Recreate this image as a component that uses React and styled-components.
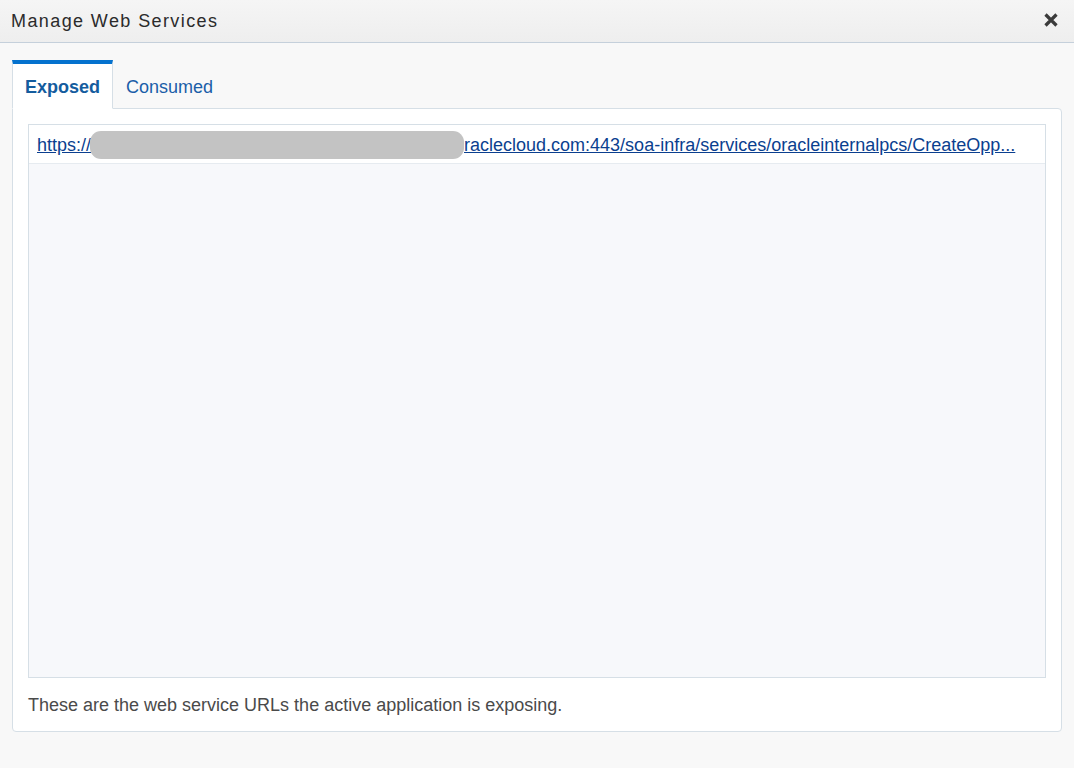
import React, { useState } from 'react'
import styled, { createGlobalStyle } from 'styled-components'

const GlobalStyle = createGlobalStyle`
  html, body {
    margin: 0;
    padding: 0;
    background: #f8f8f8;
  }
  body {
    font-family: 'Liberation Sans', Arial, sans-serif;
  }
`

const tabs = ['Exposed', 'Consumed']

const services = [
  {
    prefix: 'https://',
    rest: 'raclecloud.com:443/soa-infra/services/oracleinternalpcs/CreateOpp...',
  },
]

const App = () => {
  const [active, setActive] = useState('Exposed')
  return (
    <Dialog>
      <GlobalStyle />
      <Header>
        <Title>Manage Web Services</Title>
        <CloseButton aria-label='close'>
          <svg width='16' height='16' viewBox='0 0 16 16'>
            <path
              d='M2.5 2.5 L13.5 13.5 M13.5 2.5 L2.5 13.5'
              stroke='#3b3b3b'
              strokeWidth='3.2'
              strokeLinecap='butt'
            />
          </svg>
        </CloseButton>
      </Header>
      <Body>
        <TabBar>
          {tabs.map((tab) => (
            <Tab key={tab} $active={tab === active} onClick={() => setActive(tab)}>
              {tab}
            </Tab>
          ))}
        </TabBar>
        <Panel>
          <List>
            {services.map((s, i) => (
              <Row key={i}>
                <UrlLink href='#'>
                  {s.prefix}
                  <Redacted />
                  {s.rest}
                </UrlLink>
              </Row>
            ))}
          </List>
          <Note>These are the web service URLs the active application is exposing.</Note>
        </Panel>
      </Body>
    </Dialog>
  )
}

const Dialog = styled.div`
  width: 1074px;
  height: 768px;
  display: flex;
  flex-direction: column;
  background: #f8f8f8;
`

const Header = styled.div`
  height: 42px;
  flex-shrink: 0;
  display: flex;
  align-items: center;
  justify-content: space-between;
  padding: 0 14px 0 11px;
  background: linear-gradient(#f5f5f5, #eeeeee);
  border-bottom: 1px solid #c5d0db;
`

const Title = styled.h1`
  margin: 0;
  font-size: 18px;
  font-weight: 400;
  letter-spacing: 1.4px;
  color: #2b2b2b;
`

const CloseButton = styled.button`
  border: none;
  background: none;
  padding: 0;
  width: 18px;
  height: 18px;
  display: flex;
  align-items: center;
  justify-content: center;
  cursor: pointer;
  margin-top: -2px;
`

const Body = styled.div`
  flex: 1;
  padding: 17px 12px 36px 12px;
  display: flex;
  flex-direction: column;
`

const TabBar = styled.div`
  display: flex;
  height: 49px;
  flex-shrink: 0;
  position: relative;
  z-index: 1;
  margin-bottom: -1px;
`

const Tab = styled.button`
  font-family: inherit;
  font-size: 18px;
  padding: 2px 12px 0 12px;
  height: 49px;
  background: ${(p) => (p.$active ? '#ffffff' : 'transparent')};
  border: 1px solid ${(p) => (p.$active ? '#d6dfe6' : 'transparent')};
  border-top: 4px solid ${(p) => (p.$active ? '#0572ce' : 'transparent')};
  border-bottom: 1px solid ${(p) => (p.$active ? '#ffffff' : 'transparent')};
  font-weight: ${(p) => (p.$active ? 700 : 400)};
  color: ${(p) => (p.$active ? '#145c9e' : '#1b5ea8')};
  cursor: pointer;
`

const Panel = styled.div`
  flex: 1;
  background: #ffffff;
  border: 1px solid #d6dfe6;
  border-radius: 0 4px 4px 4px;
  padding: 15px 15px 0 15px;
  display: flex;
  flex-direction: column;
`

const List = styled.div`
  height: 552px;
  background: #f7f8fb;
  border: 1px solid #d6dfe6;
`

const Row = styled.div`
  height: 38px;
  display: flex;
  align-items: center;
  padding: 0 8px;
  background: #ffffff;
  border-bottom: 1px solid #e6ebf0;
`

const UrlLink = styled.a`
  font-size: 18px;
  color: #0b3f8f;
  text-decoration: underline;
  display: flex;
  align-items: center;
  white-space: nowrap;
  padding-top: 2px;
`

const Redacted = styled.span`
  display: inline-block;
  width: 374px;
  height: 28px;
  border-radius: 11px;
  background: #c3c3c3;
  margin: 0 0 0 -1px;
`

const Note = styled.p`
  margin: 0;
  padding-top: 17px;
  font-size: 18px;
  color: #4a4a4a;
`

export default App
